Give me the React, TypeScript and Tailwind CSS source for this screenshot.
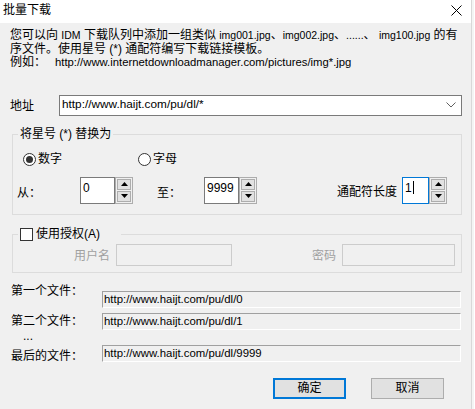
import React from 'react';

const font = { fontFamily: '"Liberation Sans", "Noto Sans CJK SC", sans-serif' };

// Latin runs in the description use a smaller, narrower size than the CJK text
function L({ children }: { children: React.ReactNode }) {
  return <span className="text-[10.5px]">{children}</span>;
}

function Arrow({ up }: { up?: boolean }) {
  return (
    <svg width="7" height="4" viewBox="0 0 7 4" className="block">
      {up ? <path d="M0 4 L3.5 0 L7 4 Z" fill="#000" /> : <path d="M0 0 L3.5 4 L7 0 Z" fill="#000" />}
    </svg>
  );
}

function Spin({ value, w, focused, cursor }: { value: string; w: string; focused?: boolean; cursor?: boolean }) {
  return (
    <div className="flex h-[27px]">
      <div
        className={`${w} h-full bg-white border pl-[2px] pt-[3px] text-[12px] leading-[14px] flex items-start ${
          focused ? 'border-[#0078d7]' : 'border-[#7a7a7a]'
        }`}
      >
        <span>{value}</span>
        {cursor && <span className="w-px h-[13px] bg-black ml-[1px]" />}
      </div>
      <div className="w-[18px] h-full border border-[#adadad] bg-[#f0f0f0] p-[1px] flex flex-col gap-[1px]">
        <div className="flex-1 border border-[#adadad] bg-[#e1e1e1] flex items-center justify-center">
          <Arrow up />
        </div>
        <div className="flex-1 border border-[#adadad] bg-[#e1e1e1] flex items-center justify-center">
          <Arrow />
        </div>
      </div>
    </div>
  );
}

function FileRow({ label, value, labelTop, fieldTop }: { label: string; value: string; labelTop: string; fieldTop: string }) {
  return (
    <div className="flex items-start pl-[11px] pr-[10px]">
      <div className={`w-[91px] ${labelTop} leading-[13.5px]`}>{label}</div>
      <div
        className={`${fieldTop} flex-1 h-[17px] border-t border-l border-t-[#a0a0a0] border-l-[#a0a0a0] border-b border-r border-b-white border-r-white bg-[#f0f0f0] pl-px text-[11.4px] leading-[15px]`}
      >
        {value}
      </div>
    </div>
  );
}

export default function App() {
  return (
    <div className="w-[475px] h-[409px] flex text-[12px] text-black overflow-hidden" style={font}>
      <div className="w-[472px] flex flex-col bg-[#f0f0f0] border-r border-[#d8d8d8]">
        {/* title bar */}
        <div className="h-[23px] bg-white flex items-center justify-between pl-[3px] pr-[9px]">
          <span className="leading-[13px] mb-[3px]">批量下载</span>
          <svg width="11" height="11" viewBox="0 0 11 11" className="mb-[3px]">
            <path d="M0.5 0.5 L10.5 10.5 M10.5 0.5 L0.5 10.5" stroke="#000" strokeWidth="1" />
          </svg>
        </div>

        {/* description */}
        <div className="pl-[10px] pt-[6px] leading-[13.5px] whitespace-nowrap">
          <div>
            您可以向 <L>IDM</L> 下载队列中添加一组类似 <L>img001.jpg</L>、<L>img002.jpg</L>、<L>......</L>、 <L>img100.jpg</L> 的有
          </div>
          <div>序文件。使用星号 (*) 通配符编写下载链接模板。</div>
          <div className="flex">
            <span className="w-[45px]">例如：</span>
            <span className="text-[11.3px]">http://www.internetdownloadmanager.com/pictures/img*.jpg</span>
          </div>
        </div>

        {/* address */}
        <div className="flex items-center pl-[10px] pr-[9px] mt-[25px]">
          <span className="w-[49px] mt-[3px] leading-[13px]">地址</span>
          <div className="flex-1 h-[21px] bg-white border border-[#7a7a7a] flex items-center justify-between pl-[2px] pr-[5px]">
            <span className="text-[11.8px]">http://www.haijt.com/pu/dl/*</span>
            <svg width="10" height="6" viewBox="0 0 10 6">
              <path d="M0.5 0.5 L5 5 L9.5 0.5" stroke="#606060" fill="none" strokeWidth="1" />
            </svg>
          </div>
        </div>

        {/* replace group */}
        <fieldset className="mx-[12px] mr-[9px] mt-[12px] border border-[#dcdcdc] pb-[10px]">
          <legend className="ml-[5px] px-[2px] leading-[13px]">将星号 (*) 替换为</legend>
          <div className="flex items-center pl-[10px] pt-[12px]">
            <label className="w-[115px] flex items-center gap-[2px]">
              <span className="w-[13px] h-[13px] rounded-full border border-[#333] bg-white flex items-center justify-center">
                <span className="w-[7px] h-[7px] rounded-full bg-[#333]" />
              </span>
              <span className="leading-[13px]">数字</span>
            </label>
            <label className="flex items-center gap-[2px]">
              <span className="w-[13px] h-[13px] rounded-full border border-[#333] bg-white" />
              <span className="leading-[13px]">字母</span>
            </label>
          </div>
          <div className="flex items-center pl-[4px] mt-[11px]">
            <span className="w-[63px] mt-[6px] leading-[13px]">从：</span>
            <Spin value="0" w="w-[35px]" />
            <span className="ml-[24px] w-[47px] mt-[6px] leading-[13px]">至：</span>
            <Spin value="9999" w="w-[35px]" />
            <span className="ml-[80px] w-[65px] mt-[5px] leading-[13px]">通配符长度</span>
            <Spin value="1" w="w-[27px]" focused cursor />
          </div>
        </fieldset>

        {/* auth group */}
        <fieldset className="mx-[12px] mr-[9px] mt-[13px] border border-[#dcdcdc] pb-[6px]">
          <legend className="ml-[5px] pl-[2px] pr-[21px] flex items-center gap-[3px] leading-[13px]">
            <span className="w-[13px] h-[13px] border border-[#333] bg-white" />
            <span>使用授权(A)</span>
          </legend>
          <div className="flex items-center pl-[61px] pt-[3px] text-[#a0a0a0]">
            <span className="w-[42px] mt-[4px] leading-[13px]">用户名</span>
            <div className="w-[116px] h-[22px] border border-[#cccccc] bg-[#f0f0f0]" />
            <span className="ml-[80px] w-[30px] mt-[4px] leading-[13px]">密码</span>
            <div className="w-[113px] h-[22px] border border-[#cccccc] bg-[#f0f0f0]" />
          </div>
        </fieldset>

        {/* file preview */}
        <div className="mt-[12px]">
          <FileRow label="第一个文件：" value="http://www.haijt.com/pu/dl/0" labelTop="mt-0" fieldTop="mt-[6px]" />
          <FileRow label="第二个文件：" value="http://www.haijt.com/pu/dl/1" labelTop="mt-[7px]" fieldTop="mt-[5px]" />
          <div className="pl-[23px] leading-[13.5px]">...</div>
          <FileRow label="最后的文件：" value="http://www.haijt.com/pu/dl/9999" labelTop="mt-[7px]" fieldTop="mt-[2px]" />
        </div>

        {/* buttons */}
        <div className="flex justify-end gap-[25px] pr-[27px] mt-[14px]">
          <button className="w-[73px] h-[21px] border-2 border-[#0078d7] bg-[#e1e1e1] leading-[13px]">确定</button>
          <button className="w-[73px] h-[21px] border border-[#adadad] bg-[#e1e1e1] leading-[13px]">取消</button>
        </div>
      </div>
      <div className="w-[2px] bg-[#f4f4f4]" />
    </div>
  );
}
